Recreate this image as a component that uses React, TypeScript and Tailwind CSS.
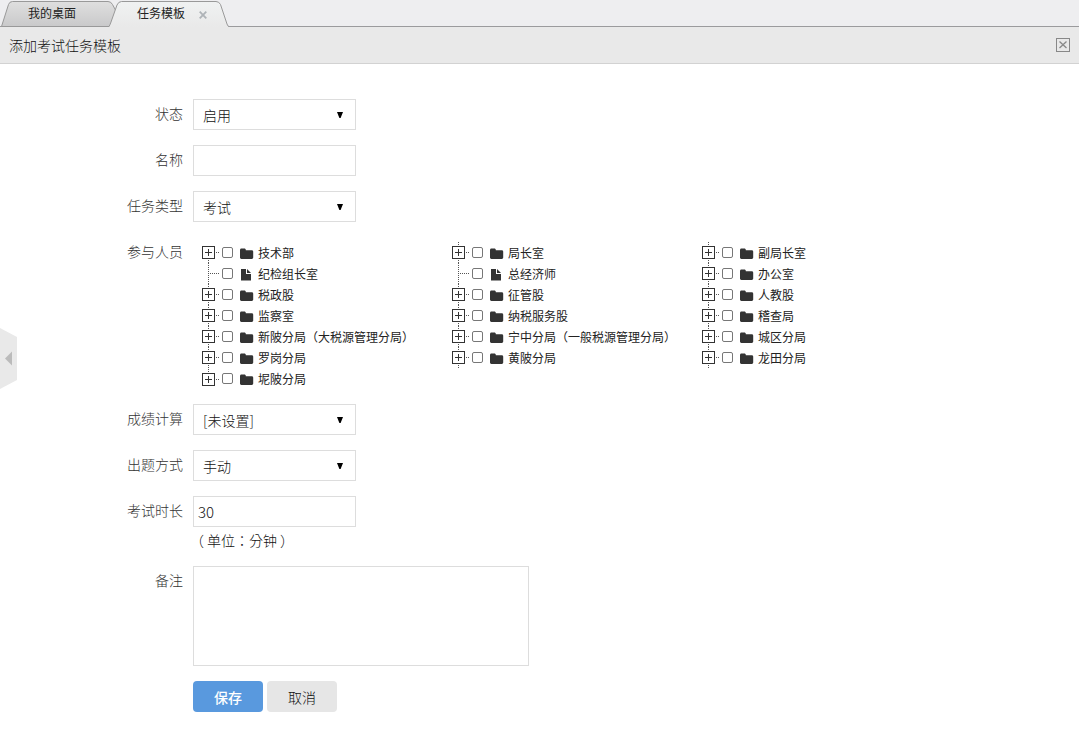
import type { ReactNode } from "react";

type Dept = { name: string; leaf?: boolean };

const columns: Dept[][] = [
  [
    { name: "技术部" },
    { name: "纪检组长室", leaf: true },
    { name: "税政股" },
    { name: "监察室" },
    { name: "新陂分局（大税源管理分局）" },
    { name: "罗岗分局" },
    { name: "坭陂分局" },
  ],
  [
    { name: "局长室" },
    { name: "总经济师", leaf: true },
    { name: "征管股" },
    { name: "纳税服务股" },
    { name: "宁中分局（一般税源管理分局）" },
    { name: "黄陂分局" },
  ],
  [
    { name: "副局长室" },
    { name: "办公室" },
    { name: "人教股" },
    { name: "稽查局" },
    { name: "城区分局" },
    { name: "龙田分局" },
  ],
];

function Branch({ leaf, up, down }: { leaf?: boolean; up: boolean; down: boolean }) {
  return (
    <svg width="18" height="21" viewBox={down ? "0 0 18 21" : "0 -1 18 21"} className="shrink-0" shapeRendering="crispEdges">
      <g stroke="#555" strokeDasharray="1 1" fill="none">
        {up && <path d="M6.5 0V11" />}
        {down && <path d="M6.5 10V21" />}
        <path d={leaf ? "M8 10.5H18" : "M14 10.5H18"} />
      </g>
      {!leaf && (
        <>
          <rect x="0.5" y="4.5" width="12" height="12" fill="#fff" stroke="#333" />
          <path d="M3 10.5h7M6.5 7v7" stroke="#333" />
        </>
      )}
    </svg>
  );
}

function FolderIcon() {
  return (
    <svg width="14" height="12" viewBox="0 0 14 12" className="mt-[2px] ml-[7px] shrink-0">
      <path d="M0 2C0 1.2.6.5 1.400.5h3c.8 0 1.400.6 1.400 1.400v.4h6c.8 0 1.400.6 1.400 1.400V9.600c0 .8-.6 1.400-1.400 1.400H1.400C.6 11 0 10.400 0 9.600Z" fill="#333" />
    </svg>
  );
}

function FileIcon() {
  return (
    <svg width="14" height="12" viewBox="0 0 14 12" className="mt-[2px] ml-[7px] shrink-0">
      <path d="M1 0H6V5H11V11.500H1Z" fill="#333" />
      <path d="M7 0 11 4H7Z" fill="#333" />
    </svg>
  );
}

function TreeRow({ dept, up, down }: { dept: Dept; up: boolean; down: boolean }) {
  return (
    <li className="flex h-[21px] items-center">
      <Branch leaf={dept.leaf} up={up} down={down} />
      <input
        type="checkbox"
        aria-label={dept.name}
        className="ml-[2px] size-[11px] shrink-0 appearance-none rounded-[2px] border border-[#777] bg-white"
      />
      {dept.leaf ? <FileIcon /> : <FolderIcon />}
      <span className="ml-[4px] text-[12px] leading-[19px] font-normal whitespace-nowrap">{dept.name}</span>
    </li>
  );
}

function Field({ label, children }: { label: string; children: ReactNode }) {
  return (
    <div className="flex items-start">
      <label className="mr-[10px] w-[183px] shrink-0 text-right leading-[28px] text-[#333]">{label}</label>
      {children}
    </div>
  );
}

function Select({ value }: { value: string }) {
  return (
    <button type="button" className="flex h-[31px] w-[163px] items-center justify-between border border-[#ddd] bg-white pr-[12px] pl-[9px]">
      <span className="leading-5">{value}</span>
      <svg width="6" height="6" viewBox="0 0 6 6">
        <path d="M0 0h6L3.600 6H2.400Z" fill="#000" />
      </svg>
    </button>
  );
}

function TabBar() {
  return (
    <nav className="relative h-[27px] bg-[#eeeef0] text-[12px] font-normal text-[#222]">
      <svg className="block" width="1079" height="27" viewBox="0 0 1079 27">
        <defs>
          <linearGradient id="idle" x1="0" y1="0" x2="0" y2="1">
            <stop offset="0" stopColor="#dfdfdf" />
            <stop offset="1" stopColor="#c9c9ca" />
          </linearGradient>
          <linearGradient id="active" x1="0" y1="0" x2="0" y2="1">
            <stop offset="0" stopColor="#f0f2f2" />
            <stop offset="1" stopColor="#e9e9e9" />
          </linearGradient>
        </defs>
        <path d="M0 26.500H1079" stroke="#9b9b9d" />
        <path d="M1.500 26.500 8.500 4.500Q9.500 1.500 12.500 1.500H108Q111 1.500 112.500 4.500L116 11 113 26.500Z" fill="url(#idle)" stroke="#999" />
        <path d="M109 27Q110 25 111 22L117 5Q118.500 1.500 121.500 1.500H216Q219 1.500 220.500 4.500L227 24Q227.800 26.500 229 27Z" fill="url(#active)" />
        <path d="M109 26.500Q110 25 111 22L117 5Q118.500 1.500 121.500 1.500H216Q219 1.500 220.500 4.500L227 24Q227.800 26.500 229 26.500" fill="none" stroke="#999" />
      </svg>
      <div className="absolute inset-0 flex items-start pl-[28px] leading-[26px]">
        <span>我的桌面</span>
        <span className="ml-[61px]">任务模板</span>
        <svg className="mt-[11px] ml-[14px]" width="8" height="8" viewBox="0 0 8 8">
          <path d="M.7.7 7.300 7.300M7.300.7.7 7.300" stroke="#aeb3b7" strokeWidth="1.800" />
        </svg>
      </div>
    </nav>
  );
}

export default function App() {
  return (
    <div className="relative h-[737px] w-[1079px] overflow-hidden bg-white font-['Noto_Sans_CJK_SC','Liberation_Sans',sans-serif] text-[14px] font-light text-[#111]">
      <TabBar />
      <header className="flex h-[37px] items-center justify-between border-b border-[#d2d2d2] bg-[#e9e9e9] pr-[9px] pl-[9px]">
        <h1 className="-mt-px leading-5 font-light">添加考试任务模板</h1>
        <svg width="14" height="14" viewBox="0 0 14 14">
          <rect x=".5" y=".5" width="13" height="13" fill="none" stroke="#888" />
          <path d="M3.500 3.500 10.500 10M10.500 3.500 3.500 10" stroke="#888" strokeWidth="1.300" />
        </svg>
      </header>

      <form className="flex flex-col gap-[15px] pt-[35px]">
        <Field label="状态"><Select value="启用" /></Field>
        <Field label="名称">
          <input aria-label="名称" className="h-[31px] w-[163px] border border-[#ddd] bg-white px-[5px]" />
        </Field>
        <Field label="任务类型"><Select value="考试" /></Field>
        <Field label="参与人员">
          <div className="flex h-[152px] pt-[5px] pl-[9px] text-[#222]">
            {columns.map((column, c) => (
              <ul key={c} className="w-[250px]">
                {column.map((dept, i) => (
                  <TreeRow key={dept.name} dept={dept} up={c > 0 || i > 0} down={c > 0 || i < column.length - 1} />
                ))}
              </ul>
            ))}
          </div>
        </Field>
        <Field label="成绩计算"><Select value="[未设置]" /></Field>
        <Field label="出题方式"><Select value="手动" /></Field>
        <Field label="考试时长">
          <div className="h-[55px]">
            <input aria-label="考试时长" defaultValue="30" className="block h-[31px] w-[163px] border border-[#ddd] bg-white px-[4px] text-[15px]" />
            <p className="mt-[3px] flex font-['Noto_Sans_CJK_TC',sans-serif] leading-5">
              <span className="-ml-[3px] mr-[3px]">（</span>
              <span>单位：分钟</span>
              <span className="ml-[3px]">）</span>
            </p>
          </div>
        </Field>
        <Field label="备注">
          <textarea aria-label="备注" className="block h-[100px] w-[336px] resize-none border border-[#ddd] bg-white" />
        </Field>
        <div className="flex gap-[4px] pl-[193px]">
          <button type="button" className="h-[31px] w-[70px] rounded-[4px] bg-[#5999de] pt-[2px] font-medium text-white">保存</button>
          <button type="button" className="h-[31px] w-[70px] rounded-[4px] bg-[#e6e6e6] pt-[2px]">取消</button>
        </div>
      </form>

      <svg className="absolute top-[328px] left-0" width="17" height="61" viewBox="0 0 17 61">
        <path d="M0 0 17 9V52L0 61Z" fill="#e9e9e9" />
        <path d="M5 30.500 12 23.500V37.500Z" fill="#bbb" />
      </svg>
    </div>
  );
}
